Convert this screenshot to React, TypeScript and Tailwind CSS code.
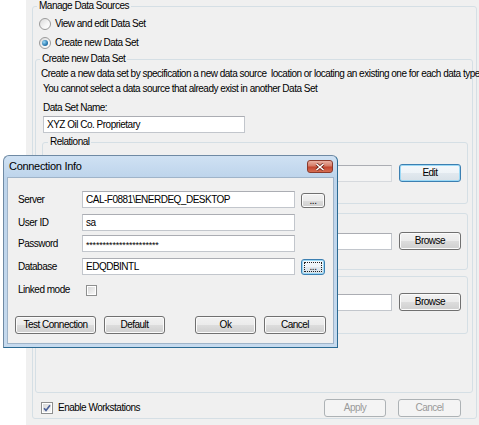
import React from "react";

const FONT = "font-['Liberation_Sans',Arial,sans-serif]";

type BtnProps = {
  label: string;
  w: string;
  h?: string;
  focused?: boolean;
  disabled?: boolean;
  dotted?: boolean;
  className?: string;
};

function Button({ label, w, h = "h-[18px]", focused, disabled, dotted, className = "" }: BtnProps) {
  let look =
    "border-[#707070] bg-[linear-gradient(#f2f2f2,#ebebeb_50%,#dddddd_50%,#cfcfcf)] shadow-[inset_0_0_0_1px_#fbfbfb] text-black";
  if (focused)
    look =
      "border-[#3c7fb1] bg-[linear-gradient(#f4f8fb,#eef3f7_50%,#e2e9ef_50%,#d8e1e8)] shadow-[inset_0_0_0_1px_#9bd9f6] text-black";
  if (disabled) look = "border-[#adb2b5] bg-[#f4f4f4] text-[#9a9a9a]";
  return (
    <div className={`${w} ${h} ${look} ${className} shrink-0 rounded-[3px] border flex items-center justify-center p-[2px]`}>
      <div
        className={`w-full h-full flex items-center justify-center ${
          dotted ? "border border-dotted border-[#222]" : ""
        }`}
      >
        {label}
      </div>
    </div>
  );
}

function TextBox({ value, w, disabled, className = "" }: { value?: React.ReactNode; w: string; disabled?: boolean; className?: string }) {
  return (
    <div
      className={`${w} ${className} h-[17px] shrink-0 border border-[#c2c6cc] border-t-[#abadb3] ${
        disabled ? "bg-[#f3f3f3] border-[#d6d9dd]" : "bg-white"
      } flex items-center pl-[3px] overflow-hidden whitespace-nowrap`}
    >
      {value}
    </div>
  );
}

function Radio({ checked }: { checked?: boolean }) {
  return (
    <div className="w-[12px] h-[12px] shrink-0 rounded-full border border-[#9a9a9a] bg-[linear-gradient(135deg,#d8d8d8,#f6f6f6_60%,#ffffff)] flex items-center justify-center">
      {checked && (
        <div className="w-[6px] h-[6px] rounded-full bg-[radial-gradient(circle_at_35%_35%,#9ad8f7,#2a7ab0_60%,#1c5a86)]" />
      )}
    </div>
  );
}

function Check({ checked, size = "w-[12px] h-[12px]" }: { checked?: boolean; size?: string }) {
  return (
    <div className={`${size} shrink-0 border border-[#8e8f8f] bg-white p-[1px]`}>
      <div className="w-full h-full bg-[linear-gradient(135deg,#d9d9d9,#f7f7f7)] flex items-center justify-center">
        {checked && (
          <svg width="8" height="8" viewBox="0 0 8 8">
            <path d="M1 4.2 L3 6.4 L7 1.2" fill="none" stroke="#4a5f97" strokeWidth="1.6" />
          </svg>
        )}
      </div>
    </div>
  );
}

const group = "min-w-0 border border-[#d5dfe5] rounded-[3px]";

export default function App() {
  return (
    <div className={`relative w-[479px] h-[425px] overflow-hidden bg-white flex ${FONT} text-[10px] leading-[12px] tracking-[-0.5px] text-black`}>
      <div className="w-[26px] shrink-0" />
      <div className="flex-1 min-w-0 h-full bg-[#f0f0f0] pl-[6px] pr-[2px]">
        {/* Manage Data Sources */}
        <fieldset className={`${group} pb-[1px]`}>
          <legend className="ml-[4px] px-[2px] leading-[12px]">Manage Data Sources</legend>
          <div className="mt-[4px] pl-[6px] h-[16px] flex items-center gap-[4px]">
            <Radio />
            <span>View and edit Data Set</span>
          </div>
          <div className="mt-[3px] pl-[6px] h-[16px] flex items-center gap-[4px]">
            <Radio checked />
            <span>Create new Data Set</span>
          </div>

          {/* Create new Data Set */}
          <fieldset className={`${group} mt-[2px] ml-[2px] mr-[3px] pb-[58px]`}>
            <legend className="ml-[4px] px-[2px] leading-[12px]">Create new Data Set</legend>
            <div className="mt-[3px] pl-[5px] whitespace-nowrap">
              Create a new data set by specification a new data source&nbsp; location or locating an existing one for each data type
            </div>
            <div className="mt-[3px] pl-[7px] whitespace-nowrap">
              You cannot select a data source that already exist in another Data Set
            </div>
            <div className="mt-[7px] pl-[7px]">Data Set Name:</div>
            <div className="mt-[2px] pl-[7px]">
              <TextBox w="w-[202px]" value="XYZ Oil Co. Proprietary" />
            </div>

            {/* Relational */}
            <fieldset className={`${group} mt-[3px] ml-[6px] mr-[4px] pb-[21px]`}>
              <legend className="ml-[5px] px-[2px] leading-[12px]">Relational</legend>
              <div className="mt-[16px] h-[18px] flex items-center gap-[7px] pl-[20px] pr-[6px]">
                <TextBox w="flex-1 min-w-0" disabled />
                <Button label="Edit" w="w-[62px]" focused />
              </div>
            </fieldset>

            <fieldset className={`${group} mt-[9px] ml-[6px] mr-[4px] pb-[19px]`}>
              <div className="mt-[18px] h-[18px] flex items-center gap-[7px] pl-[20px] pr-[6px]">
                <TextBox w="flex-1 min-w-0" />
                <Button label="Browse" w="w-[62px]" />
              </div>
            </fieldset>

            <fieldset className={`${group} mt-[6px] ml-[6px] mr-[4px] pb-[22px]`}>
              <div className="mt-[16px] h-[18px] flex items-center gap-[7px] pl-[20px] pr-[6px]">
                <TextBox w="flex-1 min-w-0" />
                <Button label="Browse" w="w-[62px]" />
              </div>
            </fieldset>
          </fieldset>

          <div className="mt-[6px] h-[18px] flex items-center pl-[8px] pr-[15px]">
            <Check checked />
            <span className="ml-[5px]">Enable Workstations</span>
            <div className="flex-1" />
            <Button label="Apply" w="w-[62px]" disabled />
            <Button label="Cancel" w="w-[63px]" disabled className="ml-[12px]" />
          </div>
        </fieldset>
      </div>

      {/* Connection Info dialog */}
      <div className="absolute left-[3px] top-[155px] w-[335px] h-[193px] rounded-t-[6px] border border-[#6f8aa4] border-r-[#2b6a93] border-b-[#2b6a93] bg-[linear-gradient(#cfe1f3,#bdd4eb_22px,#c6daee)] px-[3px] pb-[3px] flex flex-col">
        <div className="h-[21px] shrink-0 flex items-start justify-between pl-[2px] pr-[1px]">
          <span className="mt-[4px] text-[11px] leading-[12px] tracking-[-0.3px]">Connection Info</span>
          <div className="mt-[4px] w-[26px] h-[13px] rounded-[3px] border border-[#8a3a2c] bg-[linear-gradient(#eab0a2,#d57d68_45%,#c2452f_55%,#d66e53)] flex items-center justify-center">
            <svg width="10" height="8" viewBox="0 0 10 8">
              <path d="M1.5 1 L8.5 7 M8.5 1 L1.5 7" stroke="#6b2418" strokeWidth="3" />
              <path d="M1.5 1 L8.5 7 M8.5 1 L1.5 7" stroke="#ffffff" strokeWidth="1.6" />
            </svg>
          </div>
        </div>
        <div className="flex-1 bg-[#f0f0f0] border border-[#9fb4c9] flex flex-col">
          <div className="mt-[13px] h-[17px] flex items-center">
            <span className="w-[74px] pl-[10px] shrink-0">Server</span>
            <TextBox w="w-[213px]" value={"CAL-F0881\\ENERDEQ_DESKTOP"} />
            <Button label="..." w="w-[24px]" h="h-[15px]" className="ml-[6px] mt-[2px]" />
          </div>
          <div className="mt-[6px] h-[17px] flex items-center">
            <span className="w-[74px] pl-[10px] shrink-0">User ID</span>
            <TextBox w="w-[213px]" value="sa" />
          </div>
          <div className="mt-[4px] h-[17px] flex items-center">
            <span className="w-[74px] pl-[10px] shrink-0">Password</span>
            <TextBox
              w="w-[213px]"
              value={<span className="text-[9px] tracking-[-0.2px] mt-[3px]">{"*".repeat(22)}</span>}
            />
          </div>
          <div className="mt-[6px] h-[17px] flex items-center">
            <span className="w-[74px] pl-[10px] shrink-0">Database</span>
            <TextBox w="w-[213px]" value="EDQDBINTL" />
            <Button label="..." w="w-[24px]" h="h-[16px]" focused dotted className="ml-[6px]" />
          </div>
          <div className="mt-[9px] h-[12px] flex items-center">
            <span className="w-[78px] pl-[10px] shrink-0">Linked mode</span>
            <Check size="w-[11px] h-[11px]" />
          </div>
          <div className="mt-[20px] flex items-center pl-[7px]">
            <Button label="Test Connection" w="w-[81px]" />
            <Button label="Default" w="w-[61px]" className="ml-[8px]" />
            <Button label="Ok" w="w-[61px]" className="ml-[30px]" />
            <Button label="Cancel" w="w-[62px]" className="ml-[8px]" />
          </div>
        </div>
      </div>
    </div>
  );
}
